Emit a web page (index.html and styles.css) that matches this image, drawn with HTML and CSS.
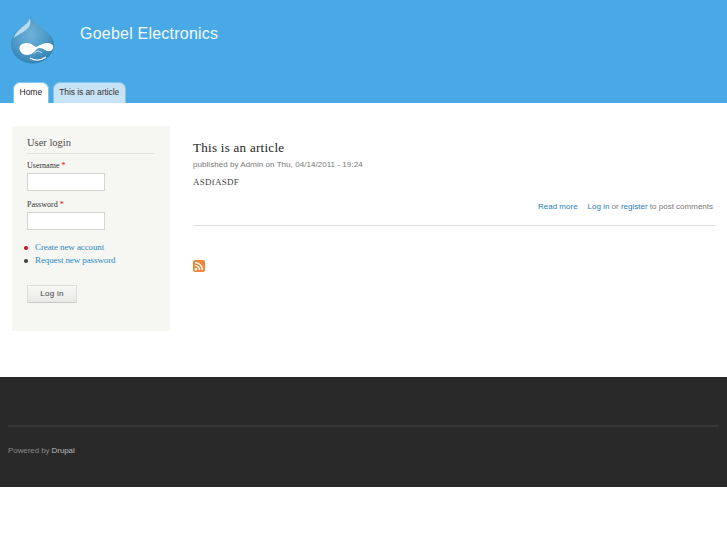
FILE: index.html
```html
<!DOCTYPE html>
<html lang="en">
<head>
<meta charset="utf-8">
<title>Goebel Electronics</title>
<link rel="stylesheet" href="styles.css">
</head>
<body>
<header class="header">
  <div class="branding">
    <svg class="logo" width="45" height="50" viewBox="0 0 45 50" aria-hidden="true">
      <defs>
        <radialGradient id="drop" cx="0.45" cy="0.4" r="0.7">
          <stop offset="0" stop-color="#6fb2da"/>
          <stop offset="0.6" stop-color="#4a97c6"/>
          <stop offset="1" stop-color="#2b79aa"/>
        </radialGradient>
      </defs>
      <path d="M20.5 0C21.5 5 27 9 32 13C39 18 44 23 44 29C44 40 34 48.500 22.500 48.500C11 48.500 1 40 1 29C1 21 7 15 12.500 11C16 8.500 20 5 20.5 0Z" fill="url(#drop)"/>
      <path d="M20 3C19 8 13 11 8.500 15.500C6 18 4 21 4 23C7 20 15 17 18.500 12.500C20.500 10 21 6 20 3Z" fill="#d3e9f5" opacity="0.8"/>
      <path d="M9.500 34C9 30 13 28 17 28C21 28 24 31 26 32C29 31 32 28 37 28C41 28 44 30 43 33C42 37 38 37 35 35C32 33 29 32 27 34C25 36 22 40 17 40C13 40 10 37 9.500 34Z" fill="#fff"/>
      <path d="M20 43C25 46 31 45.500 36 42" fill="none" stroke="#fff" stroke-width="1.400"/>
      <path d="M24 38.500C26 35.500 29 35.500 32 38" fill="none" stroke="#d5e9f4" stroke-width="1"/>
    </svg>
    <div class="site-name">Goebel Electronics</div>
  </div>
  <nav class="tabs">
    <a class="tab tab-active" href="#">Home</a>
    <a class="tab" href="#">This is an article</a>
  </nav>
</header>
<div class="content">
  <aside class="sidebar">
    <h2 class="block-title">User login</h2>
    <form class="login">
      <label class="field-label">Username <span class="req">*</span></label>
      <input class="field" type="text">
      <label class="field-label field-label-2">Password <span class="req">*</span></label>
      <input class="field" type="password">
      <ul class="links">
        <li class="link-item link-red"><a href="#">Create new account</a></li>
        <li class="link-item"><a href="#">Request new password</a></li>
      </ul>
      <button class="submit" type="button">Log in</button>
    </form>
  </aside>
  <main class="main">
    <article class="node">
      <h1 class="node-title">This is an article</h1>
      <div class="meta">published by Admin on Thu, 04/14/2011 - 19:24</div>
      <p class="body-text">ASDfASDF</p>
      <div class="node-links"><a href="#" class="more">Read more</a><span><a href="#">Log in</a> or <a href="#">register</a> to post comments</span></div>
    </article>
    <a class="feed" href="#" aria-label="RSS feed">
      <svg width="12" height="12" viewBox="0 0 12 12" aria-hidden="true">
        <rect width="12" height="12" rx="2" fill="#f0873a"/>
        <circle cx="3" cy="9.200" r="1.200" fill="#fff"/>
        <path d="M2 5.400A4.600 4.600 0 0 1 6.600 10M2 2.600A7.400 7.400 0 0 1 9.400 10" fill="none" stroke="#fff" stroke-width="1.400"/>
      </svg>
    </a>
  </main>
</div>
<footer class="footer">
  <div class="footer-line"></div>
  <div class="powered">Powered by <a href="#">Drupal</a></div>
</footer>
</body>
</html>
```
FILE: styles.css
```css
html, body { margin: 0; padding: 0; background: #fff; }
body { font-family: "Liberation Serif", serif; color: #3b3b3b; font-size: 10px; }
a { text-decoration: none; color: #0071b3; }

.header { height: 103px; background: #48a9e6; display: flex; flex-direction: column; }
.branding { height: 82px; display: flex; align-items: flex-start; padding: 15px 0 0 10px; box-sizing: border-box; }
.logo { display: block; flex: none; }
.site-name { font: 16px/20px "Liberation Sans", sans-serif; letter-spacing: .22px; color: #f3f9fd; margin: 9px 0 0 25px; }
.tabs { display: flex; gap: 4px; padding-left: 13px; height: 21px; }
.tab { font: 8.500px/19px "Liberation Sans", sans-serif; background: #c9e3f6; color: #333; padding: 0 5.500px; border: 1px solid #86c4ed; border-bottom: 0; border-radius: 7px 7px 0 0; letter-spacing: -.08px; }
.tab-active { background: #fff; color: #222; letter-spacing: 0; }

.content { display: flex; align-items: flex-start; padding: 23px 12px 0; height: 274px; box-sizing: border-box; }
.sidebar { width: 158px; height: 205px; flex: none; background: #f6f6f2; box-sizing: border-box; padding: 10px 15px 0; }
.block-title { margin: 0; font-size: 10.500px; line-height: 14px; font-weight: 400; color: #4a4a4a; padding-bottom: 3px; border-bottom: 1px solid #e2e2dc; }
.login { display: flex; flex-direction: column; align-items: flex-start; }
.field-label { font-size: 8px; line-height: 12px; color: #333; margin-top: 6px; }
.field-label + .field { margin-top: 1px; }
.field-label-2 { margin-top: 8px; }
.req { color: #e00; }
.field { width: 78px; height: 18px; margin: 0; padding: 0; box-sizing: border-box; border: 1px solid #d5d5d0; background: #fff; outline: none; }
.links { list-style: none; margin: 11px 0 0 -3px; padding: 0; }
.link-item { font-size: 9px; line-height: 13px; position: relative; padding-left: 11px; letter-spacing: -.1px; }
.link-item a { color: #2c8cc4; }
.link-item::before { content: ""; position: absolute; left: 0; top: 5px; width: 4px; height: 4px; border-radius: 50%; background: #3d3d3d; }
.link-red::before { background: #c8102e; }
.submit { margin-top: 18px; width: 50px; height: 18px; padding: 0; font: 8px/16px "Liberation Sans", sans-serif; letter-spacing: .3px; color: #444; background: linear-gradient(#f8f8f6, #e9e9e7); border: 1px solid #dcdcd8; border-bottom-color: #c8c8c4; border-radius: 1px; }

.main { flex: 1; margin-left: 23px; min-width: 0; }
.node { width: 522px; padding-top: 13px; border-bottom: 1px solid #dcdcd6; box-sizing: border-box; height: 100px; }
.node-title { margin: 0; font-size: 13px; line-height: 18px; font-weight: 400; color: #222; letter-spacing: .28px; }
.meta { font: 8px/11px "Liberation Sans", sans-serif; color: #777; letter-spacing: .05px; margin-top: 2px; }
.body-text { margin: 6px 0 0; font-size: 9px; line-height: 12px; color: #444; letter-spacing: .25px; }
.node-links { display: flex; justify-content: flex-end; gap: 10px; font: 8px/11px "Liberation Sans", sans-serif; color: #777; margin-top: 13px; padding-right: 2px; }
.node-links a { color: #1f82bb; }
.feed { display: block; width: 12px; height: 12px; margin-top: 34px; }
.feed svg { display: block; }

.footer { height: 110px; background: #292929; padding: 48px 8px 0; box-sizing: border-box; }
.footer-line { height: 2px; background: #363636; }
.powered { font: 8px/11px "Liberation Sans", sans-serif; color: #888; margin-top: 18px; letter-spacing: -.08px; }
.powered a { color: #bbb; }
```
